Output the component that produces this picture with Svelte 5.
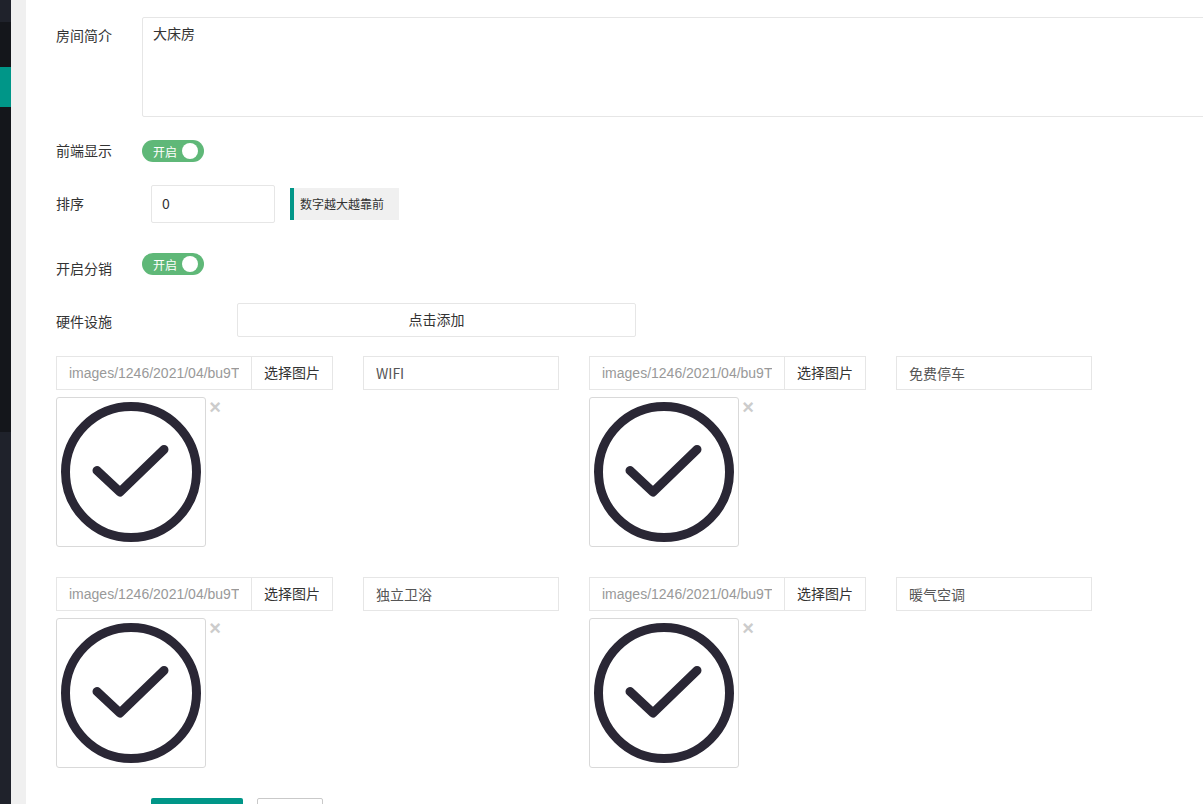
<script lang="ts">
  const facilities = [
    { thumb: "images/1246/2021/04/bu9T", name: "WIFI" },
    { thumb: "images/1246/2021/04/bu9T", name: "免费停车" },
    { thumb: "images/1246/2021/04/bu9T", name: "独立卫浴" },
    { thumb: "images/1246/2021/04/bu9T", name: "暖气空调" },
  ];

  let intro = $state("大床房");
  let sort = $state("0");
</script>

<div class="page">
  <aside class="sidebar">
    <div class="side-top"></div>
    <div class="side-dark-a"></div>
    <div class="side-active"></div>
    <div class="side-dark-b"></div>
    <div class="side-rest"></div>
  </aside>
  <div class="gutter"></div>

  <main class="content">
    <div class="row row-intro">
      <span class="label">房间简介</span>
      <textarea class="intro" bind:value={intro}></textarea>
    </div>

    <div class="row row-show">
      <span class="label">前端显示</span>
      <div class="switch"><span>开启</span><i></i></div>
    </div>

    <div class="row row-sort">
      <span class="label sort-label">排序</span>
      <input class="field sort-input" bind:value={sort} />
      <div class="aux">数字越大越靠前</div>
    </div>

    <div class="row row-dist">
      <span class="label">开启分销</span>
      <div class="switch"><span>开启</span><i></i></div>
    </div>

    <div class="row row-hw">
      <span class="label hw-label">硬件设施</span>
      <button type="button" class="add-btn">点击添加</button>
    </div>

    <div class="facilities">
      {#each facilities as item}
        <div class="facility">
          <div class="facility-top">
            <div class="input-group">
              <input class="thumb-path" value={item.thumb} readonly />
              <button type="button" class="pick">选择图片</button>
            </div>
            <input class="name-input" value={item.name} />
          </div>
          <div class="preview">
            <div class="thumb">
              <svg viewBox="0 0 148 148" width="148" height="148">
                <circle cx="74" cy="74" r="65.5" fill="none" stroke="#2a2735" stroke-width="9" />
                <path d="M40 72.5 L63 94 L107 51.5" fill="none" stroke="#2a2735" stroke-width="9" stroke-linecap="round" stroke-linejoin="round" />
              </svg>
            </div>
            <span class="remove">×</span>
          </div>
        </div>
      {/each}
    </div>

    <div class="actions">
      <button type="button" class="submit"></button>
      <button type="button" class="cancel"></button>
    </div>
  </main>
</div>

<style>
  :global(body) { margin: 0; overflow: hidden; background: #fff; }
  .page {
    display: flex; height: 804px; overflow: hidden;
    font-family: "Noto Sans CJK SC", "Liberation Sans", sans-serif;
    font-size: 14px; color: #333;
  }
  .sidebar { width: 11px; flex: none; display: flex; flex-direction: column; }
  .side-top { height: 22px; background: #1f222b; }
  .side-dark-a { height: 45px; background: #14161b; }
  .side-active { height: 40px; background: #009688; }
  .side-dark-b { height: 325px; background: #14161b; }
  .side-rest { flex: 1; background: #1f222b; }
  .gutter { width: 15px; flex: none; background: #f0f0f0; }

  .content { flex: 1; min-width: 0; padding: 17px 0 0 30px; }
  .row { display: flex; align-items: flex-start; }
  .label { width: 86px; flex: none; line-height: 20px; }

  .row-intro { height: 100px; }
  .row-intro .label { padding-top: 8px; }
  .intro {
    width: 1100px; height: 100px; flex: none; box-sizing: border-box; margin: 0;
    padding: 5px 10px; border: 1px solid #e6e6e6; border-radius: 2px; resize: none; outline: none;
    font: inherit; line-height: 20px; color: #333;
  }

  .row-show { margin-top: 23px; height: 22px; align-items: center; }
  .row-show .label { padding-bottom: 2px; }
  .row-dist { margin-top: 30px; height: 22px; }
  .row-dist .label { padding-top: 5px; }

  .switch {
    width: 62px; height: 22px; box-sizing: border-box; border-radius: 11px; background: #5fb878;
    display: flex; align-items: center; justify-content: space-between; padding: 0 6px 0 11px;
    color: #fff; font-size: 12px;
  }
  .switch i { width: 16px; height: 16px; border-radius: 50%; background: #fff; }

  .row-sort { margin-top: 23px; height: 38px; align-items: center; }
  .sort-label { width: 95px; padding-bottom: 2px; }
  .field, .name-input, .thumb-path {
    box-sizing: border-box; border: 1px solid #e6e6e6; outline: none; margin: 0;
    font: inherit; background: #fff;
  }
  .sort-input { width: 124px; height: 38px; padding: 0 10px 2px; border-radius: 2px; color: #333; }
  .aux {
    margin-left: 15px; width: 109px; height: 32px; box-sizing: border-box;
    background: #f0f0f0; border-left: 4px solid #009688; padding-left: 6px;
    font-size: 12px; line-height: 32px; white-space: nowrap;
  }

  .row-hw { margin-top: 28px; height: 34px; align-items: center; }
  .hw-label { width: 181px; padding-top: 2px; }
  .add-btn {
    width: 399px; height: 34px; box-sizing: border-box; background: #fff;
    border: 1px solid #e6e6e6; border-radius: 2px; font: inherit; color: #333; padding: 0 0 3px;
  }

  .facilities { display: grid; grid-template-columns: 533px 533px; row-gap: 30px; margin-top: 19px; }
  .facility-top { display: flex; height: 34px; }
  .input-group { display: flex; width: 277px; }
  .thumb-path {
    width: 196px; height: 34px; padding: 0 12px; color: #999;
    font-family: "Liberation Sans", sans-serif; font-size: 14px;
  }
  .pick {
    width: 82px; margin-left: -1px; height: 34px; box-sizing: border-box; background: #fff;
    border: 1px solid #e6e6e6; font: inherit; color: #333; padding: 0 0 2px;
  }
  .name-input { width: 196px; height: 34px; margin-left: 30px; padding: 0 12px; color: #555; }

  .preview { display: flex; margin-top: 7px; }
  .thumb {
    width: 150px; height: 150px; box-sizing: border-box; border: 1px solid #d9d9d9;
    border-radius: 3px; background: #fff; overflow: hidden;
  }
  .thumb svg { display: block; }
  .remove {
    margin-left: 3px; width: 12px; text-align: center; color: #ccc;
    font-family: "Liberation Sans", sans-serif; font-size: 20px; font-weight: 700; line-height: 20px;
  }

  .actions { display: flex; margin-top: 30px; margin-left: 95px; }
  .submit { width: 92px; height: 38px; border: none; border-radius: 2px; background: #009688; padding: 0; }
  .cancel {
    width: 66px; height: 38px; margin-left: 14px; box-sizing: border-box;
    border: 1px solid #c9c9c9; border-radius: 2px; background: #fff; padding: 0;
  }
</style>
